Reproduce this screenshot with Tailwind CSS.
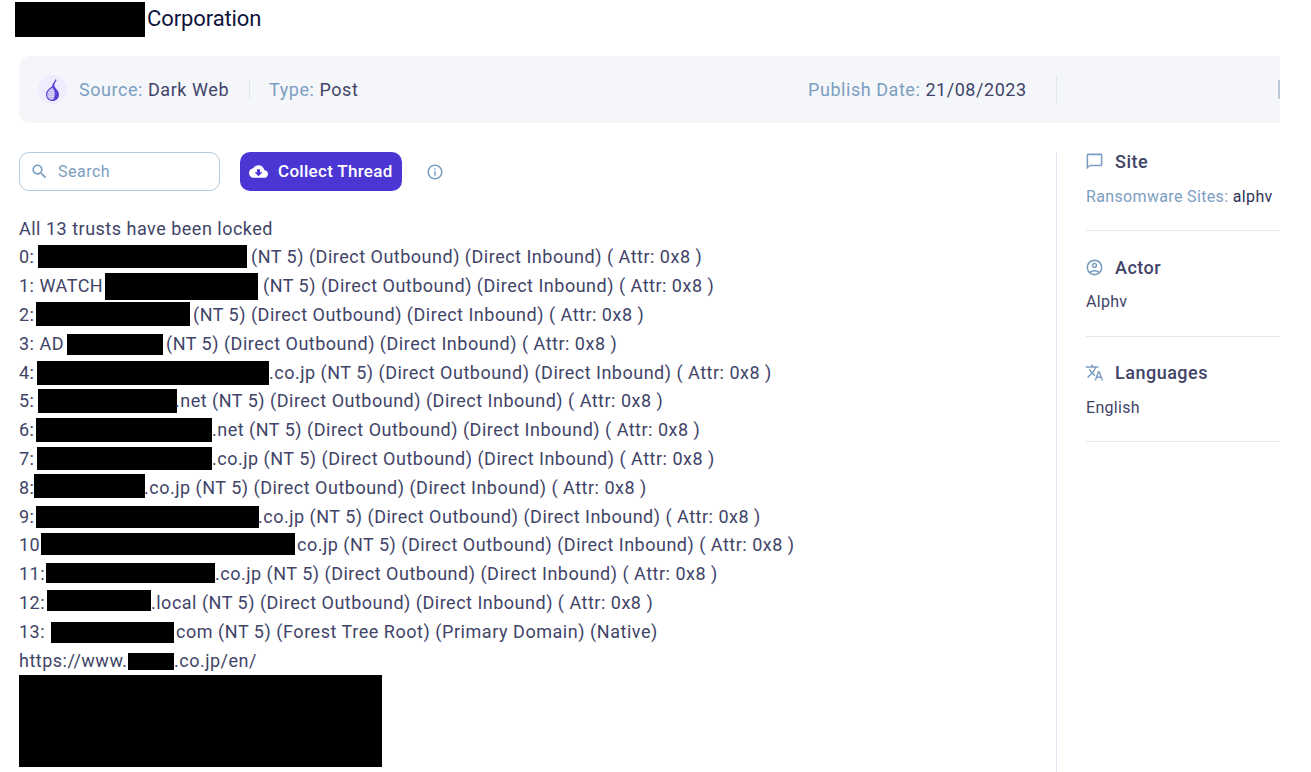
<!DOCTYPE html>
<html lang="en">
<head>
    <meta charset="UTF-8">
    <meta name="viewport" content="width=device-width, initial-scale=1.0">
    <title>Corporation</title>
    <script src="https://cdn.jsdelivr.net/npm/@tailwindcss/browser@4"></script>
</head>
<body class="bg-white font-['Roboto',sans-serif] text-[#3f4468] overflow-hidden">
    <div class="w-[1280px] h-[772px] overflow-hidden pl-[19px]">
        <!-- title -->
        <div class="h-[56px] flex -ml-[4px]">
            <span class="bg-black w-[130px] h-[35px] mt-[2px]"></span>
            <h1 class="ml-[2px] mt-[5px] text-[22px] tracking-[-0.1px] leading-[28px] text-[#10133a]">Corporation</h1>
        </div>

        <!-- meta bar -->
        <div class="relative h-[67px] bg-[#f5f6fa] rounded-l-xl flex items-center pl-[19px] text-[18px] tracking-[0.55px] whitespace-nowrap">
            <span class="w-[29px] h-[29px] rounded-full bg-[#efecfd] flex items-center justify-center">
                <svg viewBox="0 0 13 22" class="w-[13px] h-[22px] mt-px">
                    <path d="M9.500 0C9 2 7.500 3.500 6.500 5.500 6.300 6.300 6.200 6.800 6 7.500 3 9.500 0 12 0 15.500 0 19.500 3 22 6.500 22S13 19.500 13 15.500C13 12 10 10 8.500 7.500 8 5.500 8.500 4 10.500 1.500z" fill="#5a3dd4"/>
                    <path d="M6.400 8.500C3.500 10.300 1 12.800 1 15.800 1 18.500 3.200 20.800 6.500 20.900 9.500 18 9.800 12.500 6.400 8.500z" fill="#c4bcf0"/>
                    <path d="M3 13v6M5 11v9M7 11v9" fill="none" stroke="#f5f3ff" stroke-width=".8" stroke-dasharray="1 1"/>
                </svg>
            </span>
            <span class="ml-[12px] text-[#7c9ec1]">Source: <span class="text-[#3f4468]">Dark Web</span></span>
            <span class="ml-[20px] w-px h-[19px] bg-[#dfe6ef]"></span>
            <span class="ml-[19px] text-[#7c9ec1]">Type: <span class="text-[#3f4468]">Post</span></span>
            <span class="absolute left-[789px] text-[#7c9ec1]">Publish Date: <span class="text-[#3f4468]">21/08/2023</span></span>
            <span class="absolute left-[1037px] w-px h-[29px] bg-[#dfe6ef]"></span>
            <span class="absolute right-0 w-[2px] h-[19px] bg-[#b9c9da]"></span>
        </div>

        <div class="flex mt-[29px]">
            <!-- left column -->
            <div class="w-[1037px] shrink-0">
                <div class="flex items-center h-[39px]">
                    <div class="w-[201px] h-[39px] border border-[#b5cbdc] rounded-[10px] flex items-center pl-[10px]">
                        <svg viewBox="0 0 24 24" class="w-[19px] h-[19px] fill-[#7c9ec1]"><path d="M15.5 14h-.79l-.28-.27C15.41 12.59 16 11.11 16 9.5 16 5.91 13.09 3 9.500 3S3 5.910 3 9.500 5.910 16 9.500 16c1.610 0 3.090-.59 4.230-1.570l.27.28v.79l5 4.990L20.490 19l-4.990-5zm-6 0C7.010 14 5 11.990 5 9.500S7.010 5 9.500 5 14 7.010 14 9.500 11.990 14 9.500 14z"/></svg>
                        <span class="ml-[9px] text-[16px] tracking-[0.5px] text-[#7c9ec1]">Search</span>
                    </div>
                    <button class="ml-[20px] w-[162px] h-[39px] bg-[#4b35d3] rounded-[10px] flex items-center pl-[9px] text-white text-[17px] tracking-[0.3px] font-medium whitespace-nowrap">
                        <svg viewBox="0 0 24 24" class="w-[19px] h-[19px] fill-white"><path d="M19.35 10.04C18.67 6.59 15.64 4 12 4 9.110 4 6.600 5.640 5.350 8.040 2.340 8.360 0 10.910 0 14c0 3.310 2.690 6 6 6h13c2.760 0 5-2.240 5-5 0-2.640-2.050-4.780-4.650-4.960zM17 13l-5 5-5-5h3V9h4v4h3z"/></svg>
                        <span class="ml-[10px]">Collect Thread</span>
                    </button>
                    <svg viewBox="0 0 24 24" class="ml-[24px] w-[18px] h-[18px] fill-[#7c9ec1]"><path d="M11 7h2v2h-2zm0 4h2v6h-2zm1-9C6.480 2 2 6.480 2 12s4.480 10 10 10 10-4.480 10-10S17.520 2 12 2zm0 18c-4.410 0-8-3.590-8-8s3.590-8 8-8 8 3.590 8 8-3.590 8-8 8z"/></svg>
                </div>

                <!-- post body -->
                <div class="mt-[23.6px] text-[18px] tracking-[0.5px] leading-[28.8px] whitespace-nowrap">
                    <p>All 13 trusts have been locked</p>
                    <p class="flex"><span class="w-[19px]">0:</span><span class="bg-black w-[209px] h-[23px] mt-[1.6px]"></span><span class="ml-[4px]">(NT 5) (Direct Outbound) (Direct Inbound) ( Attr: 0x8 )</span></p>
                    <p class="flex"><span class="w-[86px]">1: WATCH</span><span class="bg-black w-[153px] h-[27px] mt-px"></span><span class="ml-[5px]">(NT 5) (Direct Outbound) (Direct Inbound) ( Attr: 0x8 )</span></p>
                    <p class="flex"><span class="w-[17px]">2:</span><span class="bg-black w-[154px] h-[24px] mt-px"></span><span class="ml-[3px]">(NT 5) (Direct Outbound) (Direct Inbound) ( Attr: 0x8 )</span></p>
                    <p class="flex"><span class="w-[48px]">3: AD</span><span class="bg-black w-[96px] h-[21px] mt-[4px]"></span><span class="ml-[3px]">(NT 5) (Direct Outbound) (Direct Inbound) ( Attr: 0x8 )</span></p>
                    <p class="flex"><span class="w-[18px]">4:</span><span class="bg-black w-[232px] h-[24px] mt-[2px]"></span><span>.co.jp (NT 5) (Direct Outbound) (Direct Inbound) ( Attr: 0x8 )</span></p>
                    <p class="flex"><span class="w-[19px]">5:</span><span class="bg-black w-[139px] h-[24px] mt-[2px]"></span><span class="-ml-[2px]">.net (NT 5) (Direct Outbound) (Direct Inbound) ( Attr: 0x8 )</span></p>
                    <p class="flex"><span class="w-[17px]">6:</span><span class="bg-black w-[176px] h-[24px] mt-[2px]"></span><span>.net (NT 5) (Direct Outbound) (Direct Inbound) ( Attr: 0x8 )</span></p>
                    <p class="flex"><span class="w-[18px]">7:</span><span class="bg-black w-[175px] h-[23px] mt-[2px]"></span><span>.co.jp (NT 5) (Direct Outbound) (Direct Inbound) ( Attr: 0x8 )</span></p>
                    <p class="flex"><span class="w-[15px]">8:</span><span class="bg-black w-[111px] h-[24px] mt-0"></span><span class="-ml-px">.co.jp (NT 5) (Direct Outbound) (Direct Inbound) ( Attr: 0x8 )</span></p>
                    <p class="flex"><span class="w-[17px]">9:</span><span class="bg-black w-[223px] h-[22px] mt-[3px]"></span><span class="-ml-px">.co.jp (NT 5) (Direct Outbound) (Direct Inbound) ( Attr: 0x8 )</span></p>
                    <p class="flex"><span class="w-[22px]">10</span><span class="bg-black w-[254px] h-[22px] mt-[2px]"></span><span class="ml-[2px]">co.jp (NT 5) (Direct Outbound) (Direct Inbound) ( Attr: 0x8 )</span></p>
                    <p class="flex"><span class="w-[27px]">11:</span><span class="bg-black w-[169px] h-[20px] mt-[3px]"></span><span>.co.jp (NT 5) (Direct Outbound) (Direct Inbound) ( Attr: 0x8 )</span></p>
                    <p class="flex"><span class="w-[28px]">12:</span><span class="bg-black w-[104px] h-[21px] mt-[1px]"></span><span>.local (NT 5) (Direct Outbound) (Direct Inbound) ( Attr: 0x8 )</span></p>
                    <p class="flex"><span class="w-[32px]">13:</span><span class="bg-black w-[123px] h-[21px] mt-[4px]"></span><span class="ml-[2px] tracking-[0.54px]">com (NT 5) (Forest Tree Root) (Primary Domain) (Native)</span></p>
                    <p class="flex"><span class="w-[109px]">https://www.</span><span class="bg-black w-[46px] h-[17px] mt-[6px]"></span><span>.co.jp/en/</span></p>
                    <div class="bg-black w-[363px] h-[92px]"></div>
                </div>
            </div>

            <!-- sidebar -->
            <aside class="flex-1 border-l border-[#dce7f1] h-[620px] pl-[29px]">
                <section class="h-[80px] border-b border-[#e1e9f2]">
                    <h3 class="flex items-center h-[20px] -mt-px text-[18px] tracking-[0.5px] font-medium">
                        <svg viewBox="0 0 24 24" class="w-[19px] h-[19px] fill-[#7c9ec1] mr-[11px] -ml-px"><path d="M20 2H4c-1.100 0-2 .9-2 2v18l4-4h14c1.100 0 2-.9 2-2V4c0-1.100-.9-2-2-2zm0 14H6l-2 2V4h16v12z"/></svg>Site
                    </h3>
                    <p class="mt-[16px] text-[16px] tracking-[0.35px] leading-[20px] whitespace-nowrap text-[#7c9ec1]">Ransomware Sites: <span class="text-[#2f3358]">alphv</span></p>
                </section>
                <section class="h-[106px] pt-[26px] border-b border-[#e1e9f2]">
                    <h3 class="flex items-center h-[20px] text-[18px] tracking-[0.5px] font-medium">
                        <svg viewBox="0 0 24 24" class="w-[19px] h-[19px] fill-[#7c9ec1] mr-[11px] -ml-px"><path d="M12 2C6.480 2 2 6.480 2 12s4.480 10 10 10 10-4.480 10-10S17.520 2 12 2zM7.350 18.500C8.660 17.560 10.260 17 12 17s3.340.56 4.650 1.500C15.340 19.440 13.740 20 12 20s-3.340-.56-4.650-1.500zm10.790-1.380C16.450 15.800 14.320 15 12 15s-4.450.8-6.140 2.120C4.700 15.730 4 13.950 4 12c0-4.420 3.580-8 8-8s8 3.580 8 8c0 1.950-.7 3.730-1.860 5.120zM12 6c-1.930 0-3.500 1.570-3.500 3.500S10.070 13 12 13s3.500-1.570 3.500-3.500S13.930 6 12 6zm0 5c-.83 0-1.500-.67-1.500-1.500S11.170 8 12 8s1.500.67 1.500 1.500S12.830 11 12 11z"/></svg>Actor
                    </h3>
                    <p class="mt-[15px] text-[16px] tracking-[0.3px] leading-[20px]">Alphv</p>
                </section>
                <section class="h-[105px] pt-[25px] border-b border-[#e1e9f2]">
                    <h3 class="flex items-center h-[20px] text-[18px] tracking-[0.5px] font-medium">
                        <svg viewBox="0 0 24 24" class="w-[19px] h-[19px] fill-[#7c9ec1] mr-[11px] -ml-px"><path d="M12.870 15.070l-2.540-2.510.03-.03c1.740-1.940 2.980-4.170 3.710-6.530H17V4h-7V2H8v2H1v1.990h11.170C11.500 7.920 10.440 9.750 9 11.350 8.070 10.320 7.300 9.190 6.690 8h-2c.73 1.630 1.730 3.170 2.980 4.560l-5.090 5.020L4 19l5-5 3.110 3.110.76-2.040zM18.500 10h-2L12 22h2l1.120-3h4.750L21 22h2l-4.500-12zm-2.620 7l1.620-4.330L19.120 17h-3.240z"/></svg>Languages
                    </h3>
                    <p class="mt-[16px] text-[16px] tracking-[0.3px] leading-[20px]">English</p>
                </section>
            </aside>
        </div>
    </div>
</body>
</html>
